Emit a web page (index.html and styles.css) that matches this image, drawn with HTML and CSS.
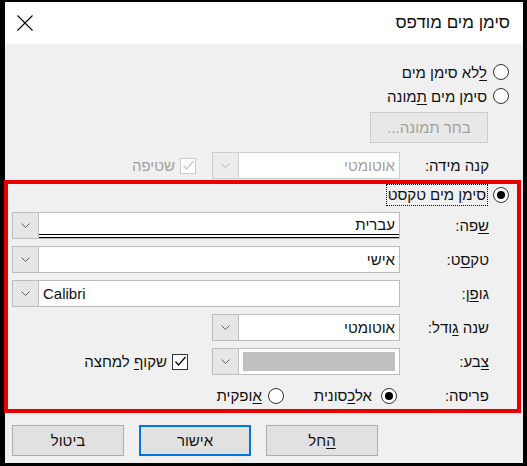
FILE: index.html
```html
<!DOCTYPE html>
<html lang="he" dir="rtl">
<head>
    <meta charset="UTF-8">
    <title>סימן מים מודפס</title>
    <link rel="stylesheet" href="styles.css">
</head>
<body>
    <div class="page">
        <div class="window">
            <div class="titlebar">
                <span class="title">סימן מים מודפס</span>
                <span class="close">
                    <svg width="16" height="16" viewBox="0 0 16 16"><path d="M0.5 0.5 L15.5 15.5 M15.5 0.5 L0.5 15.5" stroke="#000" stroke-width="1.1" fill="none"/></svg>
                </span>
            </div>
            <div class="content">
                <div class="radio-row"><span class="radio"></span><span><u>ל</u>לא סימן מים</span></div>
                <div class="radio-row"><span class="radio"></span><span>סימן מים <u>ת</u>מונה</span></div>
                <div class="pick-button">בחר תמונה...</div>

                <div class="field-row first">
                    <div class="label">קנה מידה:</div>
                    <div class="field">
                        <div class="combo narrow disabled">
                            <span class="combo-text">אוטומטי</span>
                            <span class="arrow"><svg width="9" height="5" viewBox="0 0 9 5"><path d="M0.5 0.5 L4.5 4.5 L8.5 0.5" stroke="#b0b0b0" fill="none"/></svg></span>
                        </div>
                        <span class="check disabled"><svg width="13" height="13" viewBox="0 0 13 13"><path d="M1.5 6.5 L4.5 10 L11.5 2" stroke="#c8c8c8" stroke-width="1.2" fill="none"/></svg></span>
                        <span class="check-label disabled">שטיפה</span>
                    </div>
                </div>

                <div class="radio-row text-mark"><span class="radio on"></span><span class="focus">סימ<u>ן</u> מים טקסט</span></div>

                <div class="field-row lang">
                    <div class="label"><u>ש</u>פה:</div>
                    <div class="field">
                        <div class="combo">
                            <span class="combo-text double">עברית</span>
                            <span class="arrow"><svg width="9" height="5" viewBox="0 0 9 5"><path d="M0.5 0.5 L4.5 4.5 L8.5 0.5" stroke="#606060" fill="none"/></svg></span>
                        </div>
                    </div>
                </div>

                <div class="field-row">
                    <div class="label">טק<u>ס</u>ט:</div>
                    <div class="field">
                        <div class="combo">
                            <span class="combo-text">אישי</span>
                            <span class="arrow"><svg width="9" height="5" viewBox="0 0 9 5"><path d="M0.5 0.5 L4.5 4.5 L8.5 0.5" stroke="#606060" fill="none"/></svg></span>
                        </div>
                    </div>
                </div>

                <div class="field-row">
                    <div class="label">גו<u>פ</u>ן:</div>
                    <div class="field">
                        <div class="combo">
                            <span class="combo-text latin" dir="ltr">Calibri</span>
                            <span class="arrow"><svg width="9" height="5" viewBox="0 0 9 5"><path d="M0.5 0.5 L4.5 4.5 L8.5 0.5" stroke="#606060" fill="none"/></svg></span>
                        </div>
                    </div>
                </div>

                <div class="field-row">
                    <div class="label">שנה <u>ג</u>ודל:</div>
                    <div class="field">
                        <div class="combo narrow">
                            <span class="combo-text">אוטומטי</span>
                            <span class="arrow"><svg width="9" height="5" viewBox="0 0 9 5"><path d="M0.5 0.5 L4.5 4.5 L8.5 0.5" stroke="#606060" fill="none"/></svg></span>
                        </div>
                    </div>
                </div>

                <div class="field-row">
                    <div class="label"><u>צ</u>בע:</div>
                    <div class="field">
                        <div class="combo narrow">
                            <span class="combo-text"><span class="swatch"></span></span>
                            <span class="arrow"><svg width="9" height="5" viewBox="0 0 9 5"><path d="M0.5 0.5 L4.5 4.5 L8.5 0.5" stroke="#606060" fill="none"/></svg></span>
                        </div>
                        <span class="check"><svg width="13" height="13" viewBox="0 0 13 13"><path d="M1.5 6.5 L4.5 10 L11.5 2" stroke="#000" stroke-width="1.2" fill="none"/></svg></span>
                        <span class="check-label">שקו<u>ף</u> למחצה</span>
                    </div>
                </div>

                <div class="field-row layout">
                    <div class="label">פריסה:</div>
                    <div class="field">
                        <span class="radio on"></span><span class="opt">אל<u>כ</u>סונית</span>
                        <span class="radio second"></span><span class="opt"><u>א</u>ופקית</span>
                    </div>
                </div>

                <div class="buttons">
                    <div class="btn"><u>ה</u>חל</div>
                    <div class="btn default">אישור</div>
                    <div class="btn">ביטול</div>
                </div>
            </div>
        </div>
        <div class="annotation"></div>
    </div>
</body>
</html>
```
FILE: styles.css
```css
/* Page frame */
html, body {
    margin: 0;
    padding: 0;
}

body {
    font-family: "Liberation Sans", Arial, sans-serif;
    font-size: 15px;
    color: #111;
    background: #000;
}

.page {
    position: relative;
    width: 527px;
    height: 466px;
    box-sizing: border-box;
    padding: 2px 4px 3px 5px;
    background: #000;
}

.window {
    height: 100%;
    background: #f0f0f0;
    display: flex;
    flex-direction: column;
}

u {
    text-decoration: underline;
    text-underline-offset: 2px;
}

/* Title bar */
.titlebar {
    height: 42px;
    background: #fff;
    display: flex;
    align-items: center;
    justify-content: space-between;
    padding: 0 13px 0 12px;
}

.title {
    font-size: 17px;
}

.close {
    display: flex;
    width: 16px;
    height: 16px;
}

/* Content */
.content {
    padding: 16px 14px 0 7px;
}

.radio-row {
    display: flex;
    align-items: center;
    height: 24px;
    gap: 6px;
}

.radio {
    width: 16px;
    height: 16px;
    box-sizing: border-box;
    border: 1px solid #333;
    border-radius: 50%;
    background: #fff;
    flex: none;
    position: relative;
}

.radio.on::after {
    content: "";
    position: absolute;
    width: 8px;
    height: 8px;
    border-radius: 50%;
    background: #000;
    top: 3px;
    left: 3px;
}

.pick-button {
    margin-top: 4px;
    margin-right: 21px;
    width: 118px;
    height: 31px;
    box-sizing: border-box;
    border: 1px solid #cccccc;
    background: #e8e8e8;
    color: #a0a0a0;
    display: flex;
    align-items: center;
    justify-content: center;
}

/* Field rows */
.field-row {
    display: grid;
    grid-template-columns: 109px 1fr;
    align-items: center;
    height: 27px;
    margin-top: 7px;
}

.field-row.first {
    margin-top: 9px;
}

.field-row.lang {
    margin-top: 5px;
}

.label {
    padding-right: 20px;
}

.field {
    display: flex;
    align-items: center;
}

.text-mark {
    margin-top: 4px;
}

.focus {
    outline: 1px dotted #000;
    padding: 0 1px;
    line-height: 20px;
}

.combo {
    width: 100%;
    height: 27px;
    box-sizing: border-box;
    border: 1px solid #bcbcbc;
    background: #fff;
    display: flex;
    align-items: stretch;
}

.combo.narrow {
    width: 188px;
    flex: none;
}

.combo-text {
    flex: 1;
    display: flex;
    align-items: center;
    padding: 0 4px;
    box-sizing: border-box;
}

.combo-text.double {
    border-bottom: 4px double #000;
    padding-top: 2px;
}

.combo-text.latin {
    justify-content: flex-start;
}

.arrow {
    width: 25px;
    flex: none;
    background: #e6e6e6;
    border-right: 1px solid #bcbcbc;
    display: flex;
    align-items: center;
    justify-content: center;
}

.combo.disabled {
    border-color: #cfcfcf;
}

.combo.disabled .combo-text {
    color: #a0a0a0;
}

.combo.disabled .arrow {
    background: #ececec;
    border-color: #cfcfcf;
}

.swatch {
    display: block;
    width: 100%;
    height: 19px;
    background: #c0c0c0;
}

.check {
    width: 16px;
    height: 16px;
    box-sizing: border-box;
    border: 1px solid #333;
    background: #fff;
    display: flex;
    align-items: center;
    justify-content: center;
    margin-right: 24px;
    margin-left: 5px;
}

.check.disabled {
    border-color: #cccccc;
    margin-right: 16px;
}

.check-label.disabled {
    color: #a0a0a0;
}

/* Layout radios */
.layout .radio {
    margin-right: 3px;
}

.layout .opt {
    margin-right: 9px;
}

.layout .radio.second {
    margin-right: 30px;
}

.layout .radio.second + .opt {
    margin-right: 6px;
}

/* Bottom buttons */
.buttons {
    display: flex;
    justify-content: flex-end;
    gap: 15px;
    margin-top: 16px;
}

.btn {
    width: 112px;
    height: 31px;
    box-sizing: border-box;
    border: 1px solid #adadad;
    background: #e1e1e1;
    display: flex;
    align-items: center;
    justify-content: center;
}

.btn.default {
    border: 2px solid #0078d7;
}

/* Red highlight drawn over the dialog */
.annotation {
    position: absolute;
    left: 4px;
    top: 180px;
    width: 517px;
    height: 233px;
    box-sizing: border-box;
    border: 4px solid #e80000;
    pointer-events: none;
}
```
